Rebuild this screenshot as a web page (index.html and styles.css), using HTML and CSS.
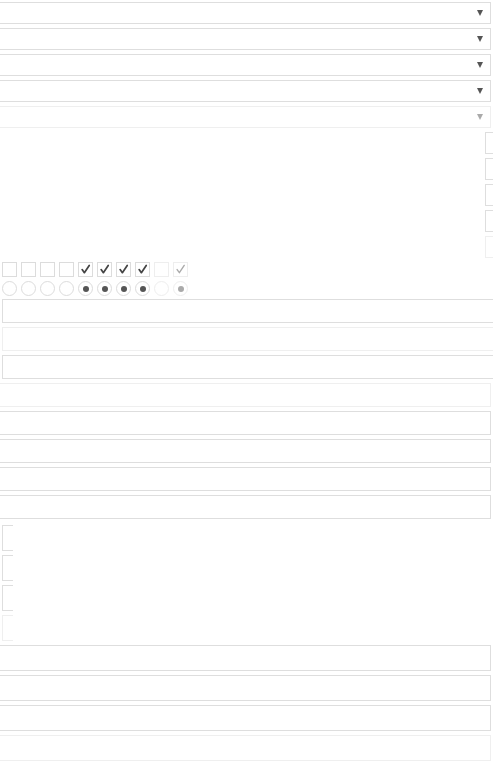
FILE: index.html
```html
<!DOCTYPE html>
<html>
<head>
<meta charset="utf-8">
<link rel="stylesheet" href="styles.css">
</head>
<body>
<div class="page">
  <div class="stack selects">
    <div class="select"><span class="arrow"></span></div>
    <div class="select"><span class="arrow"></span></div>
    <div class="select"><span class="arrow"></span></div>
    <div class="select"><span class="arrow"></span></div>
    <div class="select disabled"><span class="arrow"></span></div>
  </div>
  <div class="stack rboxes">
    <div class="rbox"></div>
    <div class="rbox"></div>
    <div class="rbox"></div>
    <div class="rbox"></div>
    <div class="rbox disabled"></div>
  </div>
  <div class="row checks">
    <span class="cb"></span><span class="cb"></span><span class="cb"></span><span class="cb"></span>
    <span class="cb on"><svg viewBox="0 0 15 15"><path d="M3.6 7.6 L6.2 11.2 L11.8 2.8"/></svg></span>
    <span class="cb on"><svg viewBox="0 0 15 15"><path d="M3.6 7.6 L6.2 11.2 L11.8 2.8"/></svg></span>
    <span class="cb on"><svg viewBox="0 0 15 15"><path d="M3.6 7.6 L6.2 11.2 L11.8 2.8"/></svg></span>
    <span class="cb on"><svg viewBox="0 0 15 15"><path d="M3.6 7.6 L6.2 11.2 L11.8 2.8"/></svg></span>
    <span class="cb disabled"></span>
    <span class="cb on disabled"><svg viewBox="0 0 15 15"><path d="M3.6 7.6 L6.2 11.2 L11.8 2.8"/></svg></span>
  </div>
  <div class="row radios">
    <span class="rd"></span><span class="rd"></span><span class="rd"></span><span class="rd"></span>
    <span class="rd on"></span><span class="rd on"></span><span class="rd on"></span><span class="rd on"></span>
    <span class="rd disabled"></span>
    <span class="rd on disabled"></span>
  </div>
  <div class="stack ninputs">
    <div class="ninput"></div>
    <div class="ninput disabled"></div>
    <div class="ninput"></div>
  </div>
  <div class="stack winputs">
    <div class="winput disabled"></div>
    <div class="winput"></div>
    <div class="winput"></div>
    <div class="winput"></div>
    <div class="winput"></div>
  </div>
  <div class="stack lboxes">
    <div class="lbox"></div>
    <div class="lbox"></div>
    <div class="lbox"></div>
    <div class="lbox disabled"></div>
  </div>
  <div class="stack binputs">
    <div class="binput"></div>
    <div class="binput"></div>
    <div class="binput"></div>
    <div class="binput disabled"></div>
  </div>
</div>
</body>
</html>
```

FILE: styles.css
```css
html, body {
  margin: 0;
  padding: 0;
  background: #ffffff;
  overflow: hidden;
  font-family: "Liberation Sans", Arial, sans-serif;
}
.page {
  width: 493px;
  height: 763px;
  overflow: hidden;
}
.stack {
  display: flex;
  flex-direction: column;
  gap: 4px;
}
.selects { padding-top: 2px; }
.select {
  box-sizing: border-box;
  height: 22px;
  margin: 0 2px 0 -10px;
  border: 1px solid #dedede;
  display: flex;
  align-items: center;
  justify-content: flex-end;
  padding-right: 7px;
}
.select.disabled { border-color: #efefef; }
.arrow {
  width: 0;
  height: 0;
  border-left: 3.5px solid transparent;
  border-right: 3.5px solid transparent;
  border-top: 6px solid #555555;
}
.select.disabled .arrow { border-top-color: #aaaaaa; }

.rboxes {
  margin-top: 4px;
  padding-left: 485px;
  align-items: flex-start;
}
.rbox {
  box-sizing: border-box;
  width: 30px;
  height: 22px;
  border: 1px solid #dedede;
  flex-shrink: 0;
}
.rbox.disabled { border-color: #efefef; }

.row {
  display: flex;
  gap: 4px;
  padding-left: 2px;
}
.checks { margin-top: 4px; }
.radios { margin-top: 4px; }
.cb, .rd {
  box-sizing: border-box;
  width: 15px;
  height: 15px;
  border: 1px solid #dcdcdc;
  display: flex;
  align-items: center;
  justify-content: center;
}
.cb.disabled, .rd.disabled { border-color: #eeeeee; }
.cb svg {
  width: 13px;
  height: 13px;
}
.cb svg path {
  fill: none;
  stroke: #444444;
  stroke-width: 2;
  stroke-linecap: round;
  stroke-linejoin: round;
}
.cb.disabled svg path { stroke: #aaaaaa; stroke-width: 1.6; }
.rd { border-radius: 50%; }
.rd.on::after {
  content: "";
  width: 6px;
  height: 6px;
  border-radius: 50%;
  background: #555555;
}
.rd.on.disabled::after { background: #aaaaaa; }

.ninputs { margin-top: 3px; }
.ninput {
  box-sizing: border-box;
  width: 600px;
  height: 24px;
  margin-left: 2px;
  border: 1px solid #dedede;
  flex-shrink: 0;
}
.ninput.disabled { border-color: #efefef; }

.winputs { margin-top: 4px; }
.winput {
  box-sizing: border-box;
  height: 24px;
  margin: 0 2px 0 -10px;
  border: 1px solid #dedede;
}
.winput.disabled { border-color: #efefef; }

.lboxes { margin-top: 6px; align-items: flex-start; }
.lbox {
  box-sizing: border-box;
  width: 11px;
  height: 26px;
  margin-left: 2px;
  border: 1px solid #dedede;
  border-right: none;
}
.lbox.disabled { border-color: #efefef; }

.binputs { margin-top: 4px; }
.binput {
  box-sizing: border-box;
  height: 26px;
  margin: 0 2px 0 -10px;
  border: 1px solid #dedede;
}
.binput.disabled { border-color: #efefef; }
```
